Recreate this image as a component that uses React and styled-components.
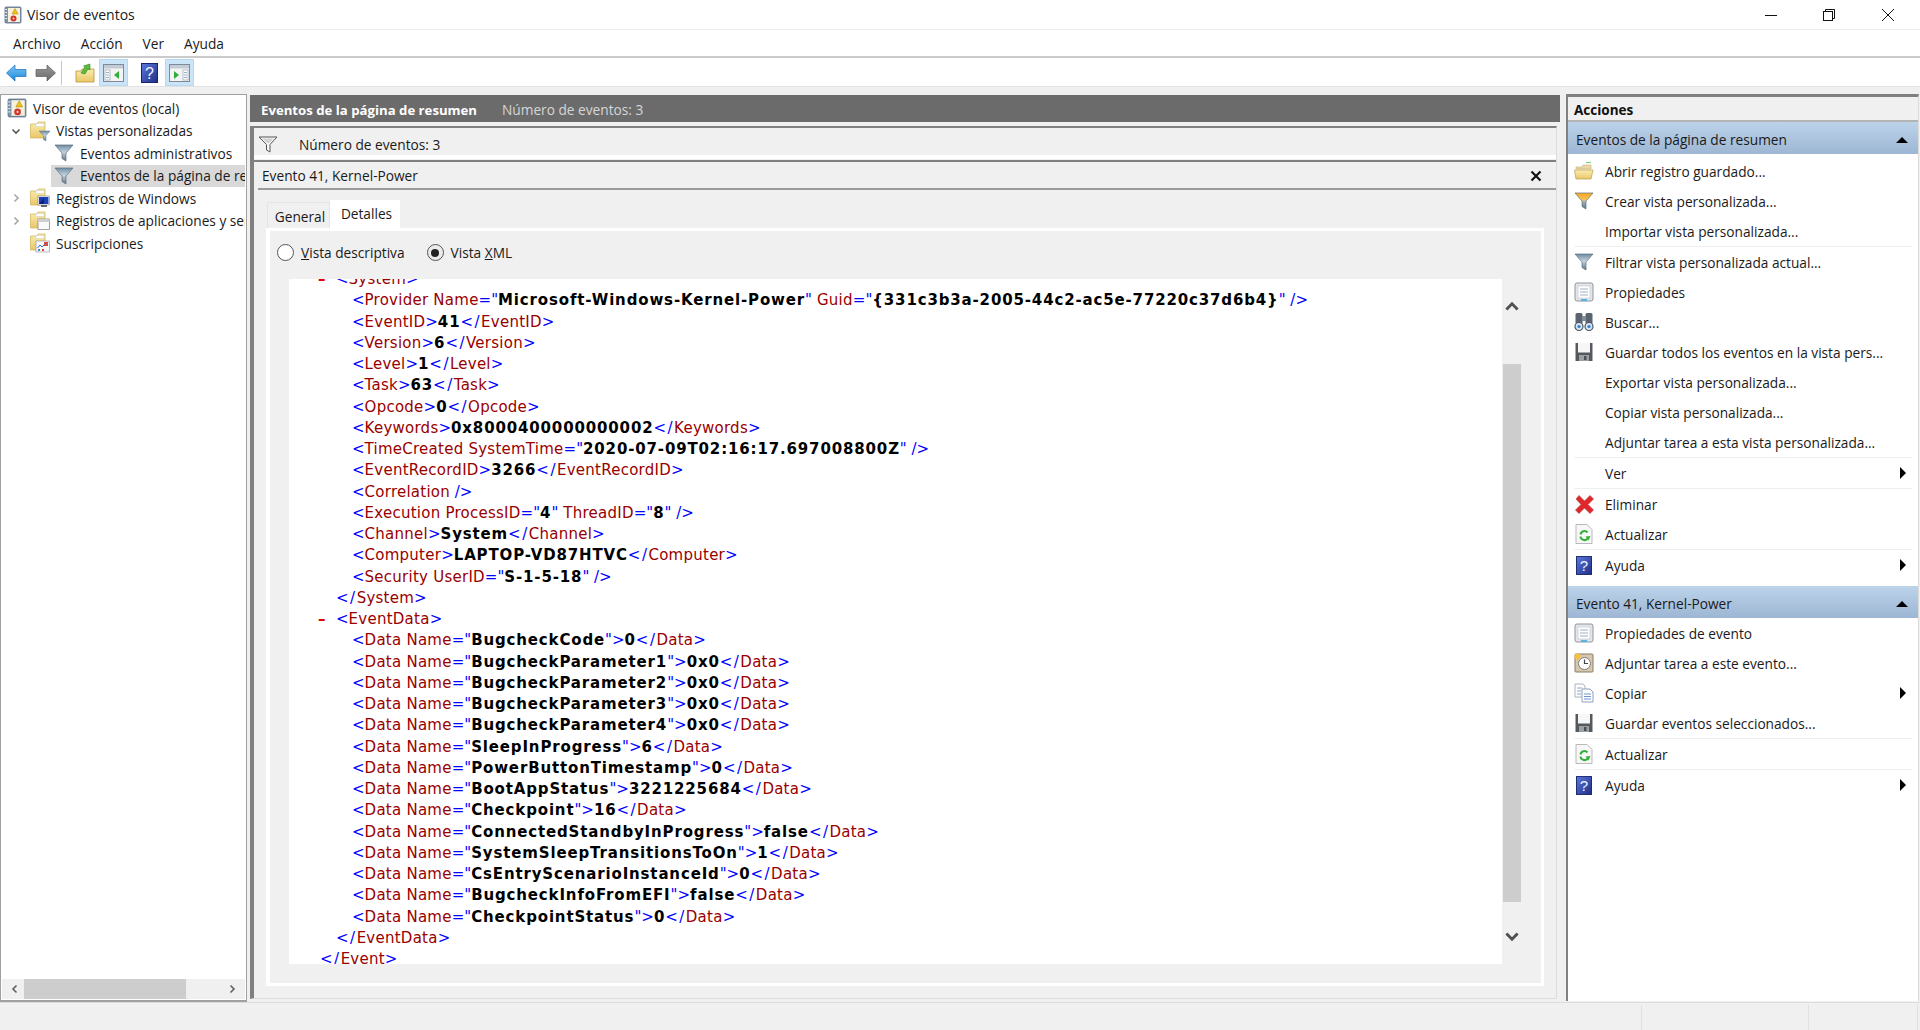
import React from 'react';
import styled, { createGlobalStyle } from 'styled-components';

const GlobalStyle = createGlobalStyle`
  html, body {
    margin: 0;
    height: 100%;
    overflow: hidden;
    background: #f0f0f0;
  }
  body {
    font-family: "Open Sans", "Noto Sans", "Liberation Sans", sans-serif;
    font-size: 13.7px;
    color: #1a1a1a;
  }
  svg {
    flex: none;
  }
`;

const Window = styled.div`
  display: flex;
  flex-direction: column;
  height: 100vh;
  width: 1920px;
  overflow: hidden;
`;

const TitleBar = styled.div`
  display: flex;
  align-items: center;
  height: 29px;
  padding-left: 4px;
  background: #fff;
  border-bottom: 1px solid #ececec;
  font-size: 14px;
  gap: 5px;
`;

const WindowButtons = styled.div`
  display: flex;
  margin-left: auto;
  padding-right: 3px;
`;

const WindowButton = styled.div`
  display: flex;
  align-items: center;
  justify-content: center;
  width: 58.5px;
  height: 29px;
`;

const MenuBar = styled.div`
  display: flex;
  align-items: center;
  height: 26px;
  padding-left: 13px;
  gap: 20px;
  background: #fff;
  border-bottom: 2px solid #cbcbcb;
`;

const ToolBar = styled.div`
  display: flex;
  align-items: center;
  box-sizing: border-box;
  height: 29px;
  padding: 1px 0 0 6px;
  background: #fff;
  border-bottom: 1px solid #e2e2e2;
`;

const ToolButton = styled.div`
  display: flex;
  align-items: center;
  justify-content: center;
  width: ${props => props.$width || 29}px;
  height: 27px;
  margin-left: ${props => props.$gap || 0}px;
  box-sizing: border-box;
  background: ${props => props.$active ? '#cce4f7' : 'transparent'};
  border: 1px solid ${props => props.$active ? '#b5d9f3' : 'transparent'};
`;

const ToolSeparator = styled.div`
  width: 1px;
  height: 24px;
  margin-left: 5px;
  background: #c8c8c8;
`;

const Main = styled.div`
  display: flex;
  flex: 1;
  min-height: 0;
  padding-top: 7px;
`;

const StatusBar = styled.div`
  display: flex;
  justify-content: flex-end;
  height: 27px;
  border-top: 1px solid #dcdcdc;
  background: #f0f0f0;
`;

const StatusCell = styled.div`
  width: ${props => props.$width}px;
  margin-top: 2px;
  border-left: 1px solid #e0e0e0;
`;

const TreePane = styled.div`
  display: flex;
  flex-direction: column;
  box-sizing: border-box;
  width: 247px;
  background: #fff;
  border: 1px solid #a0a0a0;
  border-width: 1px 1px 2px 1px;
`;

const TreeList = styled.div`
  flex: 1;
  padding-top: 2px;
  overflow: hidden;
`;

const TreeRow = styled.div`
  display: flex;
  align-items: center;
  height: 22.5px;
  white-space: nowrap;
  overflow: hidden;
  margin-left: ${props => props.$level === 2 ? 50 : 0}px;
  margin-right: 1px;
  padding-left: ${props => [6, 8, 3][props.$level]}px;
  background: ${props => props.$selected ? '#d9d9d9' : 'transparent'};
`;

const Expander = styled.span`
  display: flex;
  justify-content: center;
  flex: none;
  width: 14px;
  margin-right: 7px;
`;

const TreeLabel = styled.span`
  margin-left: 6px;
`;

const HScroll = styled.div`
  display: flex;
  align-items: center;
  height: 20px;
  margin: 0 1px 1px;
  padding: 0 8px;
  background: #f0f0f0;
`;

const HThumb = styled.div`
  width: 162px;
  height: 20px;
  margin: 0 auto 0 4px;
  background: #cdcdcd;
`;

const CenterPane = styled.div`
  display: flex;
  flex-direction: column;
  width: 1310px;
  margin: 1px 0 3px 3px;
`;

const PageHeader = styled.div`
  display: flex;
  align-items: center;
  box-sizing: border-box;
  height: 27px;
  flex: none;
  padding: 2px 0 0 11px;
  background: #6b6b6b;
  color: #fff;
  font-size: 13.2px;
  font-weight: 700;
`;

const PageHeaderCount = styled.span`
  margin-left: 25px;
  color: #d6d6d6;
  font-size: 13.7px;
  font-weight: 400;
`;

const CenterBody = styled.div`
  display: flex;
  flex-direction: column;
  flex: 1;
  min-height: 0;
  margin: 4px 3px 0 0;
  background: #f0f0f0;
  border-left: 4px solid #808080;
  border-top: 2px solid #808080;
  border-right: 1px solid #dcdcdc;
  border-bottom: 1px solid #dcdcdc;
`;

const FilterRow = styled.div`
  display: flex;
  align-items: center;
  box-sizing: content-box;
  height: 22px;
  flex: none;
  padding: 5px 0 0 4px;
  gap: 21px;
  margin-bottom: 1px;
  border-bottom: 4px solid #fff;
`;

const DetailPanel = styled.div`
  display: flex;
  flex-direction: column;
  flex: 1;
  min-height: 0;
  border-top: 2px solid #808080;
`;

const DetailTitle = styled.div`
  display: flex;
  align-items: center;
  justify-content: space-between;
  box-sizing: border-box;
  flex: none;
  height: 28px;
  margin-left: 4px;
  padding: 1px 14px 0 4px;
  border-bottom: 2px solid #9a9a9a;
`;

const TabStrip = styled.div`
  display: flex;
  align-items: flex-end;
  flex: none;
  height: 38px;
  padding-left: 13px;
`;

const Tab = styled.div`
  display: flex;
  align-items: center;
  justify-content: center;
  box-sizing: border-box;
  padding: 1px 0 ${props => props.$active ? 3 : 0}px 3px;
  width: ${props => props.$active ? 70 : 63}px;
  height: ${props => props.$active ? 28 : 26}px;
  background: ${props => props.$active ? '#fff' : '#f0f0f0'};
  border: 1px solid ${props => props.$active ? '#fff' : '#e4e4e4'};
  border-bottom: none;
`;

const TabBody = styled.div`
  display: flex;
  flex-direction: column;
  flex: 1;
  min-height: 0;
  margin: 0 12px 12px 12px;
  border: solid #fff;
  border-width: 3px 3px 3px 4px;
`;

const RadioRow = styled.div`
  display: flex;
  align-items: center;
  box-sizing: border-box;
  flex: none;
  height: 48px;
  padding: 0 0 5px 7px;
`;

const RadioLabel = styled.label`
  display: flex;
  align-items: center;
  gap: 7px;
  margin-right: 22px;
`;

const RadioMark = styled.span`
  display: flex;
  align-items: center;
  justify-content: center;
  box-sizing: border-box;
  width: 17px;
  height: 17px;
  border-radius: 50%;
  border: 1.5px solid #555;
  background: ${props => props.$checked ? '#ececec' : '#fff'};

  &::after {
    content: "";
    width: 8px;
    height: 8px;
    border-radius: 50%;
    background: ${props => props.$checked ? '#222' : 'transparent'};
  }
`;

const XmlRow = styled.div`
  display: flex;
  flex: 1;
  min-height: 0;
  margin: 0 19px 19px 19px;
`;

const XmlBox = styled.div`
  flex: 1;
  min-width: 0;
  overflow: hidden;
  background: #fff;
  padding-left: 31px;
`;

const XmlLines = styled.div`
  margin-top: -10px;
  font-family: "DejaVu Sans", Verdana, sans-serif;
  font-size: 15px;
  line-height: 21.25px;
  white-space: pre;
`;

const XmlLine = styled.div`
  padding-left: ${props => props.$level * 16}px;
`;

const Collapse = styled.span`
  display: inline-block;
  width: 18px;
  margin-left: -18px;
  color: #e00000;
  font-weight: 700;
`;

const Punct = styled.span`
  color: #0000ff;
  letter-spacing: ${props => props.$close ? 1.5 : 0}px;
`;

const Name = styled.span`
  color: #990000;
  letter-spacing: 0.25px;
`;

const Value = styled.span`
  color: #000;
  font-weight: 700;
  letter-spacing: 0.85px;
`;

const VScroll = styled.div`
  display: flex;
  flex-direction: column;
  align-items: center;
  flex: none;
  width: 20px;
  padding-top: 20px;
`;

const VThumb = styled.div`
  width: 18px;
  height: 538px;
  margin: 49px 0 26px;
  background: #cdcdcd;
`;

const ActionsPane = styled.div`
  display: flex;
  flex-direction: column;
  box-sizing: border-box;
  width: 353px;
  margin: 0 0 1px 6px;
  background: #fff;
  border-left: 2px solid #808080;
  border-top: 3px solid #808080;
  border-right: 1px solid #dcdcdc;
`;

const ActionsTitle = styled.div`
  display: flex;
  align-items: center;
  flex: none;
  padding: 2px 0 0 6px;
  box-sizing: border-box;
  height: 25px;
  background: #f0f0f0;
  border-bottom: 2px solid #b4b4b4;
  font-size: 13.5px;
  font-weight: 700;
  color: #111;
`;

const SectionHeader = styled.div`
  display: flex;
  align-items: center;
  justify-content: space-between;
  box-sizing: border-box;
  flex: none;
  height: 32px;
  margin-top: ${props => props.$first ? 0 : 6}px;
  padding: 3px 8px 0 8px;
  background: linear-gradient(#bcd3ea, #9db6d3);
`;

const ActionList = styled.div`
  padding-top: ${props => props.$first ? 2 : 0}px;
`;

const ActionRow = styled.div`
  display: flex;
  align-items: center;
  height: 30px;
  padding: 0 9px 0 6px;
  white-space: nowrap;
`;

const ActionIconBox = styled.span`
  display: flex;
  align-items: center;
  justify-content: center;
  flex: none;
  width: 20px;
  height: 20px;
  margin-right: 11px;
`;

const Separator = styled.div`
  height: 1px;
  margin: 0 6px;
  background: #efefef;
`;

const SubArrow = styled.span`
  width: 0;
  height: 0;
  margin-left: auto;
  margin-right: 3px;
  border-left: 6px solid #000;
  border-top: 6px solid transparent;
  border-bottom: 6px solid transparent;
`;

const CollapseArrow = styled.span`
  width: 0;
  height: 0;
  margin-right: 2px;
  border-left: 6px solid transparent;
  border-right: 6px solid transparent;
  border-bottom: 6px solid #000;
`;

const Defs = () => (
  <svg width="0" height="0" style={{ position: 'absolute' }}>
    <defs>
      <linearGradient id="funnelGrey" x1="0" y1="0" x2="0" y2="1">
        <stop offset="0" stopColor="#6f8ea3" />
        <stop offset="0.45" stopColor="#c2d2de" />
        <stop offset="1" stopColor="#5f7484" />
      </linearGradient>
      <linearGradient id="funnelOrange" x1="0" y1="0" x2="0" y2="1">
        <stop offset="0" stopColor="#f9a825" />
        <stop offset="0.45" stopColor="#f6c453" />
        <stop offset="0.5" stopColor="#a7b6c2" />
        <stop offset="1" stopColor="#5f7484" />
      </linearGradient>
      <linearGradient id="folderFill" x1="0" y1="0" x2="0" y2="1">
        <stop offset="0" stopColor="#fbeeb0" />
        <stop offset="1" stopColor="#e9c767" />
      </linearGradient>
      <linearGradient id="helpFill" x1="0" y1="0" x2="1" y2="1">
        <stop offset="0" stopColor="#5a78dc" />
        <stop offset="1" stopColor="#1f2f85" />
      </linearGradient>
      <linearGradient id="backFill" x1="0" y1="0" x2="0" y2="1">
        <stop offset="0" stopColor="#7cc8f5" />
        <stop offset="1" stopColor="#1b87dc" />
      </linearGradient>
      <linearGradient id="fwdFill" x1="0" y1="0" x2="0" y2="1">
        <stop offset="0" stopColor="#9a9a9a" />
        <stop offset="1" stopColor="#6a6a6a" />
      </linearGradient>
    </defs>
  </svg>
);

const LogIcon = ({ size = 18 }) => (
  <svg width={size} height={size} viewBox="0 0 18 18">
    <rect x="1" y="1" width="16" height="16" rx="1" fill="#8295b0" stroke="#5a6b86" strokeWidth="0.8" />
    <rect x="4" y="2" width="12" height="14" fill="#f6f1d8" />
    <rect x="1" y="3" width="2" height="1" fill="#dfe6ef" />
    <rect x="1" y="6" width="2" height="1" fill="#dfe6ef" />
    <rect x="1" y="9" width="2" height="1" fill="#dfe6ef" />
    <rect x="1" y="12" width="2" height="1" fill="#dfe6ef" />
    <path d="M11 2.5 L14 8 H8 Z" fill="#f3c11c" stroke="#a9820a" strokeWidth="0.5" />
    <circle cx="9.5" cy="12.5" r="3" fill="#d0342c" />
    <circle cx="9.5" cy="12.5" r="1" fill="#f6d0cc" />
  </svg>
);

const FunnelIcon = ({ size = 20, fill = 'url(#funnelGrey)' }) => (
  <svg width={size} height={size} viewBox="0 0 20 20">
    <path d="M1 2 H19 L12 10 V18 L8 15.5 V10 Z" fill={fill} stroke="#5c7080" strokeWidth="0.7" strokeLinejoin="round" />
  </svg>
);

const OutlineFunnel = () => (
  <svg width="20" height="20" viewBox="0 0 20 20">
    <path d="M1 3 H19 L12 10.5 V18 L8.5 16 V10.5 Z" fill="#f8f8f8" stroke="#555" strokeWidth="1" strokeLinejoin="round" />
    <path d="M4 4.5 H16 L11 9 H9 Z" fill="#d2d2d2" />
  </svg>
);

const FolderBase = ({ children }) => (
  <svg width="20" height="20" viewBox="0 0 20 20">
    <path d="M0.5 3 H7 L8 1 H15 V17 H0.5 Z" fill="url(#folderFill)" stroke="#cfb258" strokeWidth="0.7" />
    <rect x="6" y="2.5" width="8" height="3" fill="#fff" stroke="#c9c9c9" strokeWidth="0.5" />
    {children}
  </svg>
);

const ViewsFolder = () => (
  <FolderBase>
    <path d="M9 10 H20 L16 14.5 V20 L13.5 18.5 V14.5 Z" fill="url(#funnelGrey)" stroke="#5c7080" strokeWidth="0.5" />
  </FolderBase>
);

const WindowsFolder = () => (
  <FolderBase>
    <rect x="8" y="8" width="11.5" height="9" fill="#fff" stroke="#666" strokeWidth="0.5" />
    <rect x="9" y="9" width="9.5" height="7" fill="#1b3fb5" />
    <path d="M9 16 L14 10 V16 Z" fill="#0a1f77" />
    <rect x="11" y="17" width="6" height="2" fill="#666" />
  </FolderBase>
);

const AppsFolder = () => (
  <FolderBase>
    <rect x="8" y="8" width="11.5" height="10.5" fill="#fafafa" stroke="#7c7c7c" strokeWidth="0.7" />
    <rect x="8" y="8" width="11.5" height="3" fill="#cfcfcf" />
  </FolderBase>
);

const SubsFolder = () => (
  <FolderBase>
    <rect x="6" y="8" width="13.5" height="11" fill="#f8f8f8" stroke="#8d8d8d" strokeWidth="0.6" />
    <rect x="14" y="9" width="4" height="4" fill="#d84b3e" />
    <path d="M7.5 15 L10 12 L12 14 L15 11" fill="none" stroke="#2a6fd0" strokeWidth="1" />
    <rect x="8" y="16" width="2" height="2" fill="#3a86d8" />
    <rect x="12" y="16" width="2" height="2" fill="#d84b3e" />
  </FolderBase>
);

const BackIcon = () => (
  <svg width="21" height="18" viewBox="0 0 21 18">
    <path d="M0.5 9 L9 1 V5.5 H20 V12.5 H9 V17 Z" fill="url(#backFill)" stroke="#1470bd" strokeWidth="0.7" strokeLinejoin="round" />
  </svg>
);

const ForwardIcon = () => (
  <svg width="21" height="18" viewBox="0 0 21 18">
    <path d="M20.5 9 L12 1 V5.5 H1 V12.5 H12 V17 Z" fill="url(#fwdFill)" stroke="#5c5c5c" strokeWidth="0.7" strokeLinejoin="round" />
  </svg>
);

const UpFolderIcon = () => (
  <svg width="20" height="20" viewBox="0 0 20 20">
    <path d="M1 8 H6 L7 6 H19 V19 H1 Z" fill="url(#folderFill)" stroke="#b7953a" strokeWidth="0.8" />
    <path d="M6 10 L10 4 L8.5 3 L15 1 L15 7 L13 6 L10 11 Z" fill="#5dbb3f" stroke="#2f8a1d" strokeWidth="0.6" />
  </svg>
);

const PaneIcon = ({ right }) => (
  <svg width="21" height="18" viewBox="0 0 21 18">
    <rect x="0.5" y="0.5" width="20" height="17" fill="#f4f4f4" stroke="#7d8a99" />
    <rect x="1" y="1" width="19" height="3.5" fill="#c3ccd6" />
    {right ? (
      <>
        <rect x="14" y="6" width="5" height="10" fill="#fff" stroke="#93a3b5" strokeWidth="0.7" />
        <path d="M15 8.5 H18 M15 11 H18 M15 13.5 H18" stroke="#7f9bb8" strokeWidth="0.8" />
        <path d="M5 7 L10 11 L5 15 Z" fill="#2fae3c" />
      </>
    ) : (
      <>
        <rect x="2" y="6" width="5" height="10" fill="#fff" stroke="#93a3b5" strokeWidth="0.7" />
        <path d="M3 8.5 H6 M3 11 H6 M3 13.5 H6" stroke="#7f9bb8" strokeWidth="0.8" />
        <path d="M16 7 L11 11 L16 15 Z" fill="#2fae3c" />
      </>
    )}
  </svg>
);

const HelpIcon = ({ w = 17, h = 20 }) => (
  <svg width={w} height={h} viewBox="0 0 17 20">
    <rect x="0.5" y="0.5" width="16" height="19" fill="url(#helpFill)" stroke="#18246b" />
    <text x="8.5" y="16" textAnchor="middle" fontFamily="Liberation Sans, sans-serif" fontSize="16" fill="#eef2ff">?</text>
  </svg>
);

const OpenFolderIcon = () => (
  <svg width="20" height="20" viewBox="0 0 20 20">
    <path d="M2 6 H8 L9 4 H17 V8 H2 Z" fill="#e8d9a8" stroke="#b9a468" strokeWidth="0.5" />
    <path d="M0.5 9 H19 L17 18 H2 Z" fill="url(#folderFill)" stroke="#bb9c4b" strokeWidth="0.7" />
    <rect x="12" y="1" width="5" height="1" fill="#6fd06f" />
  </svg>
);

const PropertiesIcon = () => (
  <svg width="20" height="20" viewBox="0 0 20 20">
    <rect x="1" y="1" width="18" height="18" rx="2" fill="#e4e6e9" stroke="#8f979f" />
    <rect x="4" y="4" width="12" height="12" fill="#fff" stroke="#bcc3cb" strokeWidth="0.6" />
    <path d="M6 7 H14 M6 10 H14 M6 13 H14" stroke="#9fb0c4" strokeWidth="1" />
    <rect x="7" y="17" width="6" height="2" fill="#58b3e4" />
  </svg>
);

const BinocularsIcon = () => (
  <svg width="20" height="20" viewBox="0 0 20 20">
    <rect x="1.5" y="1" width="7" height="11" rx="1.5" fill="#5a6470" />
    <rect x="11.5" y="1" width="7" height="11" rx="1.5" fill="#5a6470" />
    <rect x="8" y="4" width="4" height="5" fill="#848c96" />
    <circle cx="5" cy="14.5" r="4" fill="#d7e6f4" stroke="#4c5661" strokeWidth="1.2" />
    <circle cx="15" cy="14.5" r="4" fill="#d7e6f4" stroke="#4c5661" strokeWidth="1.2" />
    <circle cx="5" cy="14.5" r="1.6" fill="#2f7fd0" />
    <circle cx="15" cy="14.5" r="1.6" fill="#2f7fd0" />
  </svg>
);

const FloppyIcon = () => (
  <svg width="20" height="20" viewBox="0 0 20 20">
    <path d="M1.5 1 H18.5 V19 H1.5 Z" fill="#55595e" />
    <rect x="4" y="1" width="12" height="9.5" fill="#f6f6f6" />
    <rect x="5" y="13" width="10" height="6" fill="#9ba0a5" />
    <rect x="10" y="14" width="2.5" height="4" fill="#4c5055" />
  </svg>
);

const DeleteIcon = () => (
  <svg width="21" height="21" viewBox="0 0 21 21">
    <path d="M2 5 L5 1.5 L10.5 7 L16 1.5 L19.5 5 L14 10.5 L19.5 16 L16 19.5 L10.5 14 L5 19.5 L1.5 16 L7 10.5 Z" fill="#e0272b" stroke="#b8494b" strokeWidth="0.7" strokeLinejoin="round" />
  </svg>
);

const RefreshIcon = () => (
  <svg width="18" height="20" viewBox="0 0 18 20">
    <path d="M1 0.5 H12 L17 5.5 V19.5 H1 Z" fill="#f7f7f7" stroke="#b9b9b9" />
    <path d="M5.5 10.5 A4 4 0 0 1 12.5 8.5" fill="none" stroke="#34b03a" strokeWidth="2" />
    <path d="M13 14 A4 4 0 0 1 5.5 12.5" fill="none" stroke="#34b03a" strokeWidth="2" />
    <path d="M10.5 12.5 L15.5 12 L13.5 16.5 Z" fill="#34b03a" />
  </svg>
);

const ClockTaskIcon = () => (
  <svg width="20" height="20" viewBox="0 0 20 20">
    <rect x="1" y="1" width="18" height="18" rx="1" fill="#d6c8b0" stroke="#8d7a60" />
    <circle cx="10.5" cy="10.5" r="6" fill="#fff" stroke="#7c7c7c" />
    <path d="M10.5 6.5 V10.5 H14" fill="none" stroke="#444" strokeWidth="1.2" />
    <circle cx="3.5" cy="3.5" r="3" fill="#f7c23c" />
  </svg>
);

const CopyIcon = () => (
  <svg width="20" height="20" viewBox="0 0 20 20">
    <path d="M1 1 H9 L11 3 V14 H1 Z" fill="#fff" stroke="#a9b4c2" />
    <path d="M8 6 H16 L19 9 V19 H8 Z" fill="#fff" stroke="#8da0b8" />
    <path d="M3 5 H8 M3 8 H7 M3 11 H7" stroke="#8ea6c4" />
    <path d="M10 11 H17 M10 13.5 H17 M10 16 H17" stroke="#6f97c8" />
  </svg>
);

const MinimizeGlyph = () => (
  <svg width="14" height="14" viewBox="0 0 14 14"><path d="M1 7.5 H13" stroke="#111" /></svg>
);

const RestoreGlyph = () => (
  <svg width="14" height="14" viewBox="0 0 14 14">
    <rect x="1.5" y="3.5" width="9" height="9" fill="none" stroke="#111" />
    <path d="M3.5 3.5 V1.5 H12.5 V10.5 H10.5" fill="none" stroke="#111" />
  </svg>
);

const CloseGlyph = () => (
  <svg width="14" height="14" viewBox="0 0 14 14"><path d="M1 1 L13 13 M13 1 L1 13" stroke="#111" /></svg>
);

const Chevron = ({ dir = 'right', color = '#a6a6a6', size = 10, width = 1.6 }) => {
  const paths = {
    right: 'M3.5 1.5 L7 5 L3.5 8.5',
    left: 'M6.5 1.5 L3 5 L6.5 8.5',
    down: 'M1.5 3.5 L5 7 L8.5 3.5',
    up: 'M1.5 6.5 L5 3 L8.5 6.5',
  };
  return (
    <svg width={size} height={size} viewBox="0 0 10 10">
      <path d={paths[dir]} fill="none" stroke={color} strokeWidth={width} />
    </svg>
  );
};

const treeItems = [
  { level: 0, label: 'Visor de eventos (local)', icon: <LogIcon size={20} /> },
  { level: 1, label: 'Vistas personalizadas', icon: <ViewsFolder />, expander: <Chevron dir="down" color="#555" /> },
  { level: 2, label: 'Eventos administrativos', icon: <FunnelIcon /> },
  { level: 2, label: 'Eventos de la página de resumen', icon: <FunnelIcon />, selected: true },
  { level: 1, label: 'Registros de Windows', icon: <WindowsFolder />, expander: <Chevron /> },
  { level: 1, label: 'Registros de aplicaciones y servicios', icon: <AppsFolder />, expander: <Chevron /> },
  { level: 1, label: 'Suscripciones', icon: <SubsFolder />, expander: <span /> },
];

const xmlLines = [
  [1, '<System>', true],
  [2, '<Provider Name="Microsoft-Windows-Kernel-Power" Guid="{331c3b3a-2005-44c2-ac5e-77220c37d6b4}" />'],
  [2, '<EventID>41</EventID>'],
  [2, '<Version>6</Version>'],
  [2, '<Level>1</Level>'],
  [2, '<Task>63</Task>'],
  [2, '<Opcode>0</Opcode>'],
  [2, '<Keywords>0x8000400000000002</Keywords>'],
  [2, '<TimeCreated SystemTime="2020-07-09T02:16:17.697008800Z" />'],
  [2, '<EventRecordID>3266</EventRecordID>'],
  [2, '<Correlation />'],
  [2, '<Execution ProcessID="4" ThreadID="8" />'],
  [2, '<Channel>System</Channel>'],
  [2, '<Computer>LAPTOP-VD87HTVC</Computer>'],
  [2, '<Security UserID="S-1-5-18" />'],
  [1, '</System>'],
  [1, '<EventData>', true],
  [2, '<Data Name="BugcheckCode">0</Data>'],
  [2, '<Data Name="BugcheckParameter1">0x0</Data>'],
  [2, '<Data Name="BugcheckParameter2">0x0</Data>'],
  [2, '<Data Name="BugcheckParameter3">0x0</Data>'],
  [2, '<Data Name="BugcheckParameter4">0x0</Data>'],
  [2, '<Data Name="SleepInProgress">6</Data>'],
  [2, '<Data Name="PowerButtonTimestamp">0</Data>'],
  [2, '<Data Name="BootAppStatus">3221225684</Data>'],
  [2, '<Data Name="Checkpoint">16</Data>'],
  [2, '<Data Name="ConnectedStandbyInProgress">false</Data>'],
  [2, '<Data Name="SystemSleepTransitionsToOn">1</Data>'],
  [2, '<Data Name="CsEntryScenarioInstanceId">0</Data>'],
  [2, '<Data Name="BugcheckInfoFromEFI">false</Data>'],
  [2, '<Data Name="CheckpointStatus">0</Data>'],
  [1, '</EventData>'],
  [0, '</Event>'],
];

// colours one xml line the way the viewer does: markup blue, names red, values bold
const renderXml = (line) => {
  let inTag = false;
  let inQuote = false;
  return line.split(/(<\/|<|\s*\/>|>|=|")/).filter(Boolean).map((part, i) => {
    if (part === '"') {
      inQuote = !inQuote;
      return <Punct key={i}>{part}</Punct>;
    }
    if (/^(<\/|<|\s*\/>|>|=)$/.test(part) && !inQuote) {
      inTag = part === '<' || part === '</' || part === '=';
      return <Punct key={i} $close={part === '</'}>{part}</Punct>;
    }
    if (inQuote || !inTag) return <Value key={i}>{part}</Value>;
    return <Name key={i}>{part}</Name>;
  });
};

const summaryActions = [
  { label: 'Abrir registro guardado...', icon: <OpenFolderIcon /> },
  { label: 'Crear vista personalizada...', icon: <FunnelIcon fill="url(#funnelOrange)" /> },
  { label: 'Importar vista personalizada...', separator: true },
  { label: 'Filtrar vista personalizada actual...', icon: <FunnelIcon /> },
  { label: 'Propiedades', icon: <PropertiesIcon /> },
  { label: 'Buscar...', icon: <BinocularsIcon /> },
  { label: 'Guardar todos los eventos en la vista pers...', icon: <FloppyIcon /> },
  { label: 'Exportar vista personalizada...' },
  { label: 'Copiar vista personalizada...' },
  { label: 'Adjuntar tarea a esta vista personalizada...', separator: true },
  { label: 'Ver', arrow: true, separator: true },
  { label: 'Eliminar', icon: <DeleteIcon /> },
  { label: 'Actualizar', icon: <RefreshIcon />, separator: true },
  { label: 'Ayuda', icon: <HelpIcon w={16} h={19} />, arrow: true },
];

const eventActions = [
  { label: 'Propiedades de evento', icon: <PropertiesIcon /> },
  { label: 'Adjuntar tarea a este evento...', icon: <ClockTaskIcon /> },
  { label: 'Copiar', icon: <CopyIcon />, arrow: true },
  { label: 'Guardar eventos seleccionados...', icon: <FloppyIcon />, separator: true },
  { label: 'Actualizar', icon: <RefreshIcon />, separator: true },
  { label: 'Ayuda', icon: <HelpIcon w={16} h={19} />, arrow: true },
];

const ActionGroup = ({ items, first }) => (
  <ActionList $first={first}>
    {items.map((item) => (
      <React.Fragment key={item.label}>
        <ActionRow>
          <ActionIconBox>{item.icon}</ActionIconBox>
          {item.label}
          {item.arrow && <SubArrow />}
        </ActionRow>
        {item.separator && <Separator />}
      </React.Fragment>
    ))}
  </ActionList>
);

const App = () => {
  return (
    <Window>
      <GlobalStyle />
      <Defs />
      <TitleBar>
        <LogIcon size={18} />
        Visor de eventos
        <WindowButtons>
          <WindowButton><MinimizeGlyph /></WindowButton>
          <WindowButton><RestoreGlyph /></WindowButton>
          <WindowButton><CloseGlyph /></WindowButton>
        </WindowButtons>
      </TitleBar>
      <MenuBar>
        <span>Archivo</span>
        <span>Acción</span>
        <span>Ver</span>
        <span>Ayuda</span>
      </MenuBar>
      <ToolBar>
        <BackIcon />
        <ToolButton $width={21} $gap={8}><ForwardIcon /></ToolButton>
        <ToolSeparator />
        <ToolButton $width={20} $gap={13}><UpFolderIcon /></ToolButton>
        <ToolButton $active $gap={4}><PaneIcon /></ToolButton>
        <ToolButton $width={17} $gap={13}><HelpIcon /></ToolButton>
        <ToolButton $active $gap={7}><PaneIcon right /></ToolButton>
      </ToolBar>
      <Main>
        <TreePane>
          <TreeList>
            {treeItems.map((item) => (
              <TreeRow key={item.label} $level={item.level} $selected={item.selected}>
                {item.expander && <Expander>{item.expander}</Expander>}
                {item.icon}
                <TreeLabel>{item.label}</TreeLabel>
              </TreeRow>
            ))}
          </TreeList>
          <HScroll>
            <Chevron dir="left" color="#606060" />
            <HThumb />
            <Chevron dir="right" color="#606060" />
          </HScroll>
        </TreePane>
        <CenterPane>
          <PageHeader>
            Eventos de la página de resumen
            <PageHeaderCount>Número de eventos: 3</PageHeaderCount>
          </PageHeader>
          <CenterBody>
            <FilterRow>
              <OutlineFunnel />
              Número de eventos: 3
            </FilterRow>
            <DetailPanel>
              <DetailTitle>
                Evento 41, Kernel-Power
                <svg width="12" height="12" viewBox="0 0 12 12">
                  <path d="M1.5 1.5 L10.5 10.5 M10.5 1.5 L1.5 10.5" stroke="#111" strokeWidth="2.2" />
                </svg>
              </DetailTitle>
              <TabStrip>
                <Tab>General</Tab>
                <Tab $active>Detalles</Tab>
              </TabStrip>
              <TabBody>
                <RadioRow>
                  <RadioLabel>
                    <RadioMark />
                    <span><u>V</u>ista descriptiva</span>
                  </RadioLabel>
                  <RadioLabel>
                    <RadioMark $checked />
                    <span>Vista <u>X</u>ML</span>
                  </RadioLabel>
                </RadioRow>
                <XmlRow>
                  <XmlBox>
                    <XmlLines>
                      {xmlLines.map(([level, text, collapsible], i) => (
                        <XmlLine key={i} $level={level}>
                          {collapsible && <Collapse>–</Collapse>}
                          {renderXml(text)}
                        </XmlLine>
                      ))}
                    </XmlLines>
                  </XmlBox>
                  <VScroll>
                    <Chevron dir="up" color="#505050" size={16} width={1.8} />
                    <VThumb />
                    <Chevron dir="down" color="#505050" size={16} width={1.8} />
                  </VScroll>
                </XmlRow>
              </TabBody>
            </DetailPanel>
          </CenterBody>
        </CenterPane>
        <ActionsPane>
          <ActionsTitle>Acciones</ActionsTitle>
          <SectionHeader $first>
            Eventos de la página de resumen
            <CollapseArrow />
          </SectionHeader>
          <ActionGroup items={summaryActions} first />
          <SectionHeader>
            Evento 41, Kernel-Power
            <CollapseArrow />
          </SectionHeader>
          <ActionGroup items={eventActions} />
        </ActionsPane>
      </Main>
      <StatusBar>
        <StatusCell $width={166} />
        <StatusCell $width={108} />
        <StatusCell $width={2} />
      </StatusBar>
    </Window>
  );
};

export default App;
